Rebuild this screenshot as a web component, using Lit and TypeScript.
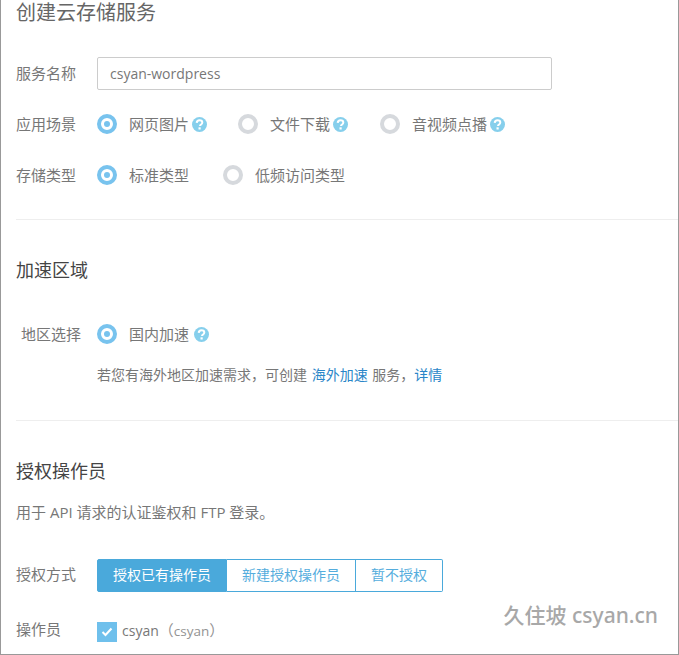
import { LitElement, html, css, svg } from "lit";
import { customElement } from "lit/decorators.js";

const help = (wide = false) => html`<svg class="help ${wide ? "wide" : ""}" viewBox="0 0 15 15" aria-hidden="true">
  <circle cx="7.5" cy="7.5" r="7.5" fill="#86cfec"></circle>
  ${svg`<path d="M4.7 5.900c.1-1.700 1.200-2.600 2.800-2.600 1.600 0 2.800.9 2.800 2.200 0 1-.5 1.500-1.400 2.100-.7.400-.9.800-.9 1.400" fill="none" stroke="#fff" stroke-width="2"></path>
  <rect x="6.500" y="10.300" width="2.200" height="2.200" fill="#fff"></rect>`}
</svg>`;

@customElement("app-root")
export class AppRoot extends LitElement {
  static styles = css`
    :host {
      display: block;
      width: 679px;
      height: 655px;
      box-sizing: border-box;
      position: relative;
      overflow: hidden;
      background: #fff;
      border: 1px solid #999;
      border-top: 0;
      padding-left: 15px;
      font-family: "Open Sans", "Noto Sans CJK SC", sans-serif;
      font-size: 15px;
      color: #777;
    }
    h2 {
      margin: 0;
      font-weight: 400;
      font-size: 18px;
      line-height: 24px;
      color: #444;
    }
    .first {
      font-family: "Liberation Sans", "Noto Sans CJK SC", sans-serif;
      font-size: 20px;
      padding-top: 1px;
      height: 23px;
      margin-bottom: 33px;
      color: #666;
    }
    .row {
      display: flex;
      align-items: center;
    }
    .label {
      width: 81px;
      flex: none;
      white-space: nowrap;
      margin-bottom: 2px;
    }
    .input {
      width: 455px;
      height: 33px;
      box-sizing: border-box;
      border: 1px solid #ccc;
      border-radius: 2px;
      padding: 0 12px;
      line-height: 31px;
      font-size: 14px;
      color: #777;
    }
    .r1 { height: 20px; margin-top: 24px; }
    .r2 { height: 20px; margin-top: 31px; }
    .radio {
      width: 20px;
      height: 20px;
      box-sizing: border-box;
      border-radius: 50%;
      border: 4px solid #d6d9dd;
      background: #fff;
      flex: none;
      margin-right: 12px;
      position: relative;
    }
    .radio.on { border-color: #78c3ee; }
    .radio.on::after {
      content: "";
      position: absolute;
      left: 3px;
      top: 3px;
      width: 6px;
      height: 6px;
      border-radius: 50%;
      background: #78c3ee;
    }
    .opt {
      display: flex;
      align-items: center;
      white-space: nowrap;
    }
    .t { margin-bottom: 2px; }
    .help {
      width: 15px;
      height: 15px;
      margin-left: 3px;
      flex: none;
    }
    .help.wide { margin-left: 5px; }
    .opt.a { width: 141px; }
    .opt.b { width: 142px; }
    .opt.s { width: 126px; }
    hr {
      border: 0;
      height: 1px;
      background: #eee;
      margin: 0;
    }
    .hr1 { margin-top: 34px; }
    .h2b { margin-top: 38px; }
    .region { height: 20px; margin-top: 42px; }
    .region .label { padding-left: 5px; width: 76px; }
    .note {
      margin: 22px 0 0 81px;
      font-size: 14px;
      line-height: 18px;
      white-space: nowrap;
      word-spacing: 1px;
    }
    .note a { color: #2a86c8; text-decoration: none; }
    .hr2 { margin-top: 36px; }
    .h2c { margin-top: 38px; }
    .desc {
      margin-top: 19px;
      line-height: 20px;
      white-space: nowrap;
    }
    .auth { height: 33px; margin-top: 37px; }
    .auth .label { margin-bottom: 4px; }
    .group { display: flex; height: 33px; font-size: 14px; }
    .btn {
      box-sizing: border-box;
      height: 33px;
      line-height: 30px;
      text-align: center;
      border: 1px solid #4aa9db;
      border-left-width: 0;
      color: #55addd;
      background: #fff;
    }
    .btn.active {
      width: 130px;
      background: #4aa9db;
      color: #fff;
      border-left-width: 1px;
      border-radius: 2px 0 0 2px;
    }
    .btn.b2 { width: 129px; }
    .btn.b3 { width: 87px; border-radius: 0 2px 2px 0; }
    .op { height: 20px; margin-top: 30px; align-items: flex-start; }
    .op .label { line-height: 14px; margin-bottom: 0; }
    .check {
      width: 20px;
      height: 20px;
      background: #6fc0ec;
      flex: none;
      margin-right: 5px;
      display: flex;
      align-items: center;
      justify-content: center;
    }
    .check svg { width: 12px; height: 10px; }
    .name { font-size: 14px; line-height: 16px; white-space: nowrap; }
    .login { color: #939393; font-size: 15px; }
    .login b { font-weight: 400; font-size: 13.5px; }
    .watermark {
      position: absolute;
      right: 20px;
      top: 601px;
      font-family: "Noto Sans", "Noto Sans CJK SC", sans-serif;
      font-size: 21px;
      line-height: 28px;
      font-weight: 500;
      color: #a8a8a8;
      white-space: nowrap;
    }
  `;

  render() {
    return html`
      <h2 class="first">创建云存储服务</h2>
      <div class="row">
        <div class="label">服务名称</div>
        <div class="input">csyan-wordpress</div>
      </div>
      <div class="row r1">
        <div class="label">应用场景</div>
        <div class="opt a"><span class="radio on"></span><span class="t">网页图片</span>${help()}</div>
        <div class="opt b"><span class="radio"></span><span class="t">文件下载</span>${help()}</div>
        <div class="opt"><span class="radio"></span><span class="t">音视频点播</span>${help()}</div>
      </div>
      <div class="row r2">
        <div class="label">存储类型</div>
        <div class="opt s"><span class="radio on"></span><span class="t">标准类型</span></div>
        <div class="opt"><span class="radio"></span><span class="t">低频访问类型</span></div>
      </div>
      <hr class="hr1" />
      <h2 class="h2b">加速区域</h2>
      <div class="row region">
        <div class="label">地区选择</div>
        <div class="opt"><span class="radio on"></span><span class="t">国内加速</span>${help(true)}</div>
      </div>
      <div class="note">若您有海外地区加速需求，可创建 <a>海外加速</a> 服务，<a>详情</a></div>
      <hr class="hr2" />
      <h2 class="h2c">授权操作员</h2>
      <div class="desc">用于 API 请求的认证鉴权和 FTP 登录。</div>
      <div class="row auth">
        <div class="label">授权方式</div>
        <div class="group">
          <div class="btn active">授权已有操作员</div>
          <div class="btn b2">新建授权操作员</div>
          <div class="btn b3">暂不授权</div>
        </div>
      </div>
      <div class="row op">
        <div class="label">操作员</div>
        <span class="check"><svg viewBox="0 0 12 10"><path d="M1.500 5l3 3 6-6.500" fill="none" stroke="#fff" stroke-width="2"></path></svg></span>
        <span class="name">csyan<span class="login">（<b>csyan</b>）</span></span>
      </div>
      <div class="watermark">久住坡 csyan.cn</div>
    `;
  }
}
